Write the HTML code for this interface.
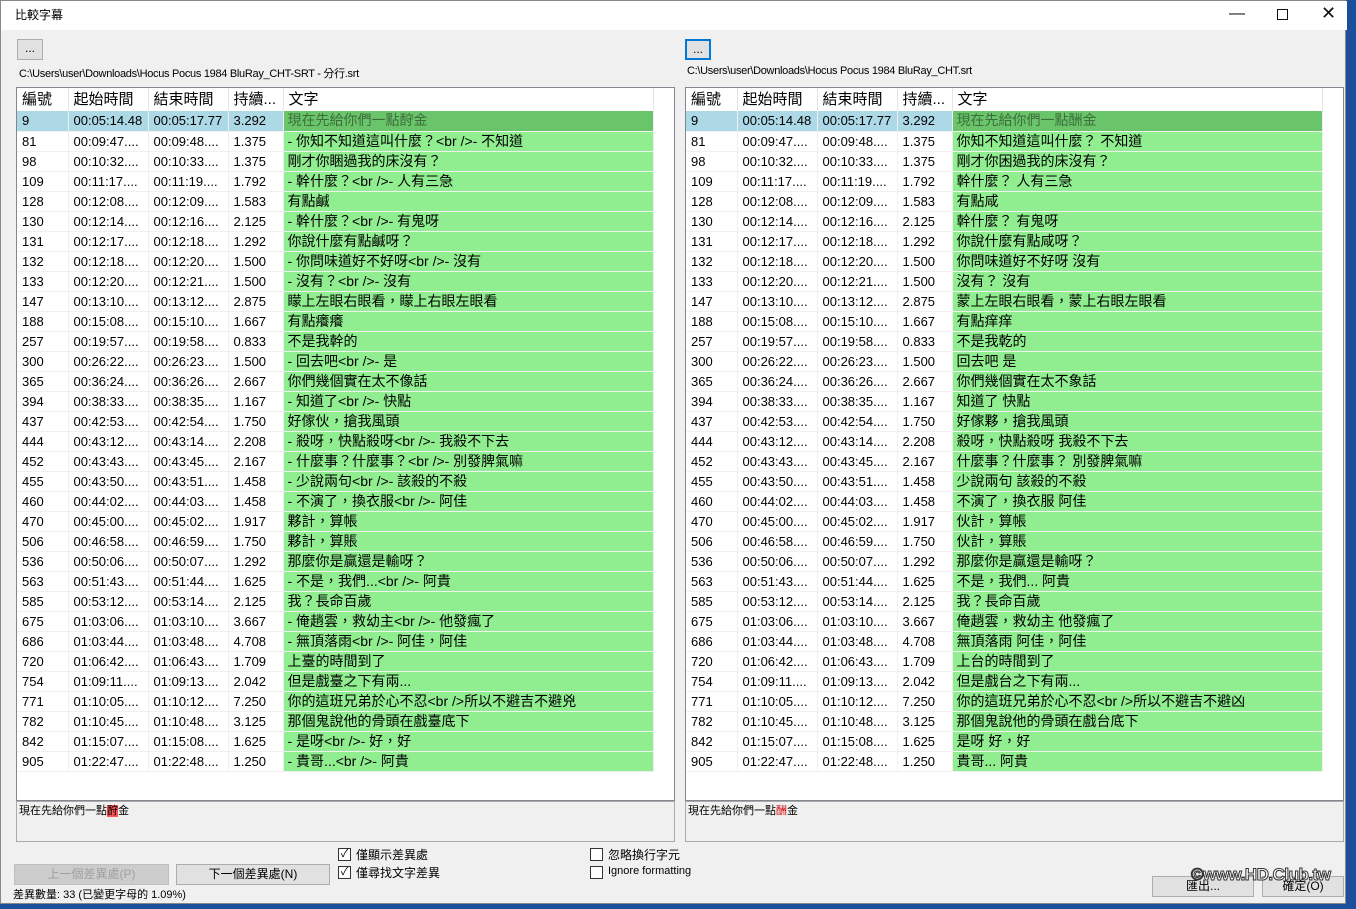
<!DOCTYPE html>
<html><head><meta charset="utf-8">
<style>
*{box-sizing:border-box;margin:0;padding:0}
body{width:1356px;height:909px;overflow:hidden;background:#1b4f9c;font-family:"Liberation Sans","Noto Sans CJK TC",sans-serif;position:relative}
.win{position:absolute;left:0;top:0;width:1346px;height:904px;background:#f0f0f0;border:1px solid #888}
.title{position:absolute;left:0;top:0;width:1346px;height:29px;background:#fff}
.title span{position:absolute;left:14px;top:5px;font-size:12px;color:#000}
.ctl{position:absolute;top:4px;font-size:16px;color:#111}
.btn{position:absolute;background:#e1e1e1;border:1px solid #adadad;font-size:12px;text-align:center;color:#000}
.path{position:absolute;font-size:11px;color:#000;letter-spacing:-0.3px}
.lv{position:absolute;top:86px;width:659px;height:714px;background:#fff;border:1px solid #828790;overflow:hidden}
table{border-collapse:collapse;table-layout:fixed;position:absolute;left:0;top:-2px}
th{height:25px;font-weight:normal;font-size:15px;text-align:left;padding-left:5px;border-right:1px solid #e5e5e5;white-space:nowrap;overflow:hidden}
td{height:20px;font-size:13px;padding-left:5px;white-space:nowrap;overflow:hidden;border-bottom:1px solid #f0f0f0;border-right:1px solid #f0f0f0;line-height:19px}
td.g{background:#90ee90;padding-left:4px;font-size:14px}
tr.s td{background:#add8e6}
tr.s td.g{background:#6ac46a;color:#3c6e3c}
.dbox{position:absolute;top:800px;width:659px;height:41px;background:#f0f0f0;border:1px solid #aaa;font-size:11px;padding:0 2px}
.cb{position:absolute;width:13px;height:13px;border:1px solid #333;background:#fff;font-size:11px;line-height:11px;text-align:center}
.lbl{position:absolute;font-size:12px}
</style></head><body>
<div class="win">
<div class="title"><span>比較字幕</span>
<div class="ctl" style="left:1228px">&#8212;</div>
<div style="position:absolute;left:1276px;top:8px;width:11px;height:11px;border:1px solid #111"></div>
<div class="ctl" style="left:1320px;top:2px;font-size:18px">&#10005;</div>
</div>
<div class="btn" style="left:16px;top:38px;width:26px;height:21px;line-height:16px">...</div>
<div class="btn" style="left:684px;top:38px;width:26px;height:21px;line-height:16px;border:2px solid #0078d7">...</div>
<div class="path" style="left:18px;top:64px">C:\Users\user\Downloads\Hocus Pocus 1984 BluRay_CHT-SRT - 分行.srt</div>
<div class="path" style="left:686px;top:64px">C:\Users\user\Downloads\Hocus Pocus 1984 BluRay_CHT.srt</div>

<div class="lv" style="left:15px">
<table style="width:636px">
<colgroup><col style="width:51px"><col style="width:80px"><col style="width:80px"><col style="width:55px"><col style="width:370px"></colgroup>
<tr><th>編號</th><th>起始時間</th><th>結束時間</th><th>持續...</th><th>文字</th></tr>
<tr class="s"><td>9</td><td>00:05:14.48</td><td>00:05:17.77</td><td>3.292</td><td class="g">現在先給你們一點酧金</td></tr>
<tr><td>81</td><td>00:09:47....</td><td>00:09:48....</td><td>1.375</td><td class="g">- 你知不知道這叫什麼？&lt;br /&gt;- 不知道</td></tr>
<tr><td>98</td><td>00:10:32....</td><td>00:10:33....</td><td>1.375</td><td class="g">剛才你睏過我的床沒有？</td></tr>
<tr><td>109</td><td>00:11:17....</td><td>00:11:19....</td><td>1.792</td><td class="g">- 幹什麼？&lt;br /&gt;- 人有三急</td></tr>
<tr><td>128</td><td>00:12:08....</td><td>00:12:09....</td><td>1.583</td><td class="g">有點鹹</td></tr>
<tr><td>130</td><td>00:12:14....</td><td>00:12:16....</td><td>2.125</td><td class="g">- 幹什麼？&lt;br /&gt;- 有鬼呀</td></tr>
<tr><td>131</td><td>00:12:17....</td><td>00:12:18....</td><td>1.292</td><td class="g">你說什麼有點鹹呀？</td></tr>
<tr><td>132</td><td>00:12:18....</td><td>00:12:20....</td><td>1.500</td><td class="g">- 你問味道好不好呀&lt;br /&gt;- 沒有</td></tr>
<tr><td>133</td><td>00:12:20....</td><td>00:12:21....</td><td>1.500</td><td class="g">- 沒有？&lt;br /&gt;- 沒有</td></tr>
<tr><td>147</td><td>00:13:10....</td><td>00:13:12....</td><td>2.875</td><td class="g">矇上左眼右眼看，矇上右眼左眼看</td></tr>
<tr><td>188</td><td>00:15:08....</td><td>00:15:10....</td><td>1.667</td><td class="g">有點癢癢</td></tr>
<tr><td>257</td><td>00:19:57....</td><td>00:19:58....</td><td>0.833</td><td class="g">不是我幹的</td></tr>
<tr><td>300</td><td>00:26:22....</td><td>00:26:23....</td><td>1.500</td><td class="g">- 回去吧&lt;br /&gt;- 是</td></tr>
<tr><td>365</td><td>00:36:24....</td><td>00:36:26....</td><td>2.667</td><td class="g">你們幾個實在太不像話</td></tr>
<tr><td>394</td><td>00:38:33....</td><td>00:38:35....</td><td>1.167</td><td class="g">- 知道了&lt;br /&gt;- 快點</td></tr>
<tr><td>437</td><td>00:42:53....</td><td>00:42:54....</td><td>1.750</td><td class="g">好傢伙，搶我風頭</td></tr>
<tr><td>444</td><td>00:43:12....</td><td>00:43:14....</td><td>2.208</td><td class="g">- 殺呀，快點殺呀&lt;br /&gt;- 我殺不下去</td></tr>
<tr><td>452</td><td>00:43:43....</td><td>00:43:45....</td><td>2.167</td><td class="g">- 什麼事？什麼事？&lt;br /&gt;- 別發脾氣嘛</td></tr>
<tr><td>455</td><td>00:43:50....</td><td>00:43:51....</td><td>1.458</td><td class="g">- 少說兩句&lt;br /&gt;- 該殺的不殺</td></tr>
<tr><td>460</td><td>00:44:02....</td><td>00:44:03....</td><td>1.458</td><td class="g">- 不演了，換衣服&lt;br /&gt;- 阿佳</td></tr>
<tr><td>470</td><td>00:45:00....</td><td>00:45:02....</td><td>1.917</td><td class="g">夥計，算帳</td></tr>
<tr><td>506</td><td>00:46:58....</td><td>00:46:59....</td><td>1.750</td><td class="g">夥計，算賬</td></tr>
<tr><td>536</td><td>00:50:06....</td><td>00:50:07....</td><td>1.292</td><td class="g">那麼你是贏還是輸呀？</td></tr>
<tr><td>563</td><td>00:51:43....</td><td>00:51:44....</td><td>1.625</td><td class="g">- 不是，我們...&lt;br /&gt;- 阿貴</td></tr>
<tr><td>585</td><td>00:53:12....</td><td>00:53:14....</td><td>2.125</td><td class="g">我？長命百歲</td></tr>
<tr><td>675</td><td>01:03:06....</td><td>01:03:10....</td><td>3.667</td><td class="g">- 俺趙雲，救幼主&lt;br /&gt;- 他發瘋了</td></tr>
<tr><td>686</td><td>01:03:44....</td><td>01:03:48....</td><td>4.708</td><td class="g">- 無頂落雨&lt;br /&gt;- 阿佳，阿佳</td></tr>
<tr><td>720</td><td>01:06:42....</td><td>01:06:43....</td><td>1.709</td><td class="g">上臺的時間到了</td></tr>
<tr><td>754</td><td>01:09:11....</td><td>01:09:13....</td><td>2.042</td><td class="g">但是戲臺之下有兩...</td></tr>
<tr><td>771</td><td>01:10:05....</td><td>01:10:12....</td><td>7.250</td><td class="g">你的這班兄弟於心不忍&lt;br /&gt;所以不避吉不避兇</td></tr>
<tr><td>782</td><td>01:10:45....</td><td>01:10:48....</td><td>3.125</td><td class="g">那個鬼說他的骨頭在戲臺底下</td></tr>
<tr><td>842</td><td>01:15:07....</td><td>01:15:08....</td><td>1.625</td><td class="g">- 是呀&lt;br /&gt;- 好，好</td></tr>
<tr><td>905</td><td>01:22:47....</td><td>01:22:48....</td><td>1.250</td><td class="g">- 貴哥...&lt;br /&gt;- 阿貴</td></tr>
</table></div>

<div class="lv" style="left:684px">
<table style="width:636px">
<colgroup><col style="width:51px"><col style="width:80px"><col style="width:80px"><col style="width:55px"><col style="width:370px"></colgroup>
<tr><th>編號</th><th>起始時間</th><th>結束時間</th><th>持續...</th><th>文字</th></tr>
<tr class="s"><td>9</td><td>00:05:14.48</td><td>00:05:17.77</td><td>3.292</td><td class="g">現在先給你們一點酬金</td></tr>
<tr><td>81</td><td>00:09:47....</td><td>00:09:48....</td><td>1.375</td><td class="g">你知不知道這叫什麼？ 不知道</td></tr>
<tr><td>98</td><td>00:10:32....</td><td>00:10:33....</td><td>1.375</td><td class="g">剛才你困過我的床沒有？</td></tr>
<tr><td>109</td><td>00:11:17....</td><td>00:11:19....</td><td>1.792</td><td class="g">幹什麼？ 人有三急</td></tr>
<tr><td>128</td><td>00:12:08....</td><td>00:12:09....</td><td>1.583</td><td class="g">有點咸</td></tr>
<tr><td>130</td><td>00:12:14....</td><td>00:12:16....</td><td>2.125</td><td class="g">幹什麼？ 有鬼呀</td></tr>
<tr><td>131</td><td>00:12:17....</td><td>00:12:18....</td><td>1.292</td><td class="g">你說什麼有點咸呀？</td></tr>
<tr><td>132</td><td>00:12:18....</td><td>00:12:20....</td><td>1.500</td><td class="g">你問味道好不好呀 沒有</td></tr>
<tr><td>133</td><td>00:12:20....</td><td>00:12:21....</td><td>1.500</td><td class="g">沒有？ 沒有</td></tr>
<tr><td>147</td><td>00:13:10....</td><td>00:13:12....</td><td>2.875</td><td class="g">蒙上左眼右眼看，蒙上右眼左眼看</td></tr>
<tr><td>188</td><td>00:15:08....</td><td>00:15:10....</td><td>1.667</td><td class="g">有點痒痒</td></tr>
<tr><td>257</td><td>00:19:57....</td><td>00:19:58....</td><td>0.833</td><td class="g">不是我乾的</td></tr>
<tr><td>300</td><td>00:26:22....</td><td>00:26:23....</td><td>1.500</td><td class="g">回去吧 是</td></tr>
<tr><td>365</td><td>00:36:24....</td><td>00:36:26....</td><td>2.667</td><td class="g">你們幾個實在太不象話</td></tr>
<tr><td>394</td><td>00:38:33....</td><td>00:38:35....</td><td>1.167</td><td class="g">知道了 快點</td></tr>
<tr><td>437</td><td>00:42:53....</td><td>00:42:54....</td><td>1.750</td><td class="g">好傢夥，搶我風頭</td></tr>
<tr><td>444</td><td>00:43:12....</td><td>00:43:14....</td><td>2.208</td><td class="g">殺呀，快點殺呀 我殺不下去</td></tr>
<tr><td>452</td><td>00:43:43....</td><td>00:43:45....</td><td>2.167</td><td class="g">什麼事？什麼事？ 別發脾氣嘛</td></tr>
<tr><td>455</td><td>00:43:50....</td><td>00:43:51....</td><td>1.458</td><td class="g">少說兩句 該殺的不殺</td></tr>
<tr><td>460</td><td>00:44:02....</td><td>00:44:03....</td><td>1.458</td><td class="g">不演了，換衣服 阿佳</td></tr>
<tr><td>470</td><td>00:45:00....</td><td>00:45:02....</td><td>1.917</td><td class="g">伙計，算帳</td></tr>
<tr><td>506</td><td>00:46:58....</td><td>00:46:59....</td><td>1.750</td><td class="g">伙計，算賬</td></tr>
<tr><td>536</td><td>00:50:06....</td><td>00:50:07....</td><td>1.292</td><td class="g">那麼你是贏還是輸呀？</td></tr>
<tr><td>563</td><td>00:51:43....</td><td>00:51:44....</td><td>1.625</td><td class="g">不是，我們... 阿貴</td></tr>
<tr><td>585</td><td>00:53:12....</td><td>00:53:14....</td><td>2.125</td><td class="g">我？長命百歲</td></tr>
<tr><td>675</td><td>01:03:06....</td><td>01:03:10....</td><td>3.667</td><td class="g">俺趙雲，救幼主 他發瘋了</td></tr>
<tr><td>686</td><td>01:03:44....</td><td>01:03:48....</td><td>4.708</td><td class="g">無頂落雨 阿佳，阿佳</td></tr>
<tr><td>720</td><td>01:06:42....</td><td>01:06:43....</td><td>1.709</td><td class="g">上台的時間到了</td></tr>
<tr><td>754</td><td>01:09:11....</td><td>01:09:13....</td><td>2.042</td><td class="g">但是戲台之下有兩...</td></tr>
<tr><td>771</td><td>01:10:05....</td><td>01:10:12....</td><td>7.250</td><td class="g">你的這班兄弟於心不忍&lt;br /&gt;所以不避吉不避凶</td></tr>
<tr><td>782</td><td>01:10:45....</td><td>01:10:48....</td><td>3.125</td><td class="g">那個鬼說他的骨頭在戲台底下</td></tr>
<tr><td>842</td><td>01:15:07....</td><td>01:15:08....</td><td>1.625</td><td class="g">是呀 好，好</td></tr>
<tr><td>905</td><td>01:22:47....</td><td>01:22:48....</td><td>1.250</td><td class="g">貴哥... 阿貴</td></tr>
</table></div>

<div class="dbox" style="left:15px">現在先給你們一點<span style="background:#f55">酧</span>金</div>
<div class="dbox" style="left:684px">現在先給你們一點<span style="color:#c00">酬</span>金</div>

<div class="btn" style="left:13px;top:863px;width:155px;height:21px;line-height:19px;color:#a0a0a0;background:#ccc;border-color:#bfbfbf">上一個差異處(P)</div>
<div class="btn" style="left:175px;top:863px;width:154px;height:21px;line-height:19px">下一個差異處(N)</div>
<div class="cb" style="left:337px;top:847px">&#10003;</div><div class="lbl" style="left:355px;top:845px">僅顯示差異處</div>
<div class="cb" style="left:337px;top:865px">&#10003;</div><div class="lbl" style="left:355px;top:863px">僅尋找文字差異</div>
<div class="cb" style="left:589px;top:847px"></div><div class="lbl" style="left:607px;top:845px">忽略換行字元</div>
<div class="cb" style="left:589px;top:865px"></div><div class="lbl" style="left:607px;top:864px;font-size:11px">Ignore formatting</div>
<div class="lbl" style="left:12px;top:885px;font-size:11px">差異數量: 33 (已變更字母的 1.09%)</div>
<div class="btn" style="left:1151px;top:875px;width:102px;height:21px;line-height:19px">匯出...</div>
<div class="btn" style="left:1261px;top:875px;width:82px;height:21px;line-height:19px">確定(O)</div>
<div style="position:absolute;left:1190px;top:864px;font-size:17px;font-weight:bold;color:#fff;-webkit-text-stroke:1px #333;letter-spacing:-0.5px">©www.HD.Club.tw</div>
</div>
</body></html>
